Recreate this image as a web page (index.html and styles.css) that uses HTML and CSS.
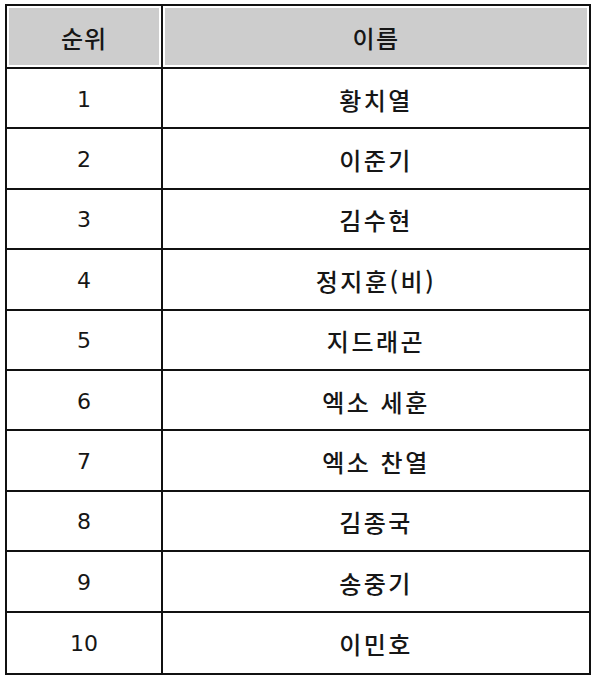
FILE: index.html
```html
<!DOCTYPE html>
<html lang="ko">
<head>
<meta charset="utf-8">
<title>순위</title>
<link rel="stylesheet" href="styles.css">
</head>
<body>
<div class="rank-table">
  <div class="cell head">순위</div>
  <div class="cell head name">이름</div>
  <div class="cell num">1</div><div class="cell name">황치열</div>
  <div class="cell num">2</div><div class="cell name">이준기</div>
  <div class="cell num">3</div><div class="cell name">김수현</div>
  <div class="cell num">4</div><div class="cell name">정지훈(비)</div>
  <div class="cell num">5</div><div class="cell name">지드래곤</div>
  <div class="cell num">6</div><div class="cell name">엑소 세훈</div>
  <div class="cell num">7</div><div class="cell name">엑소 찬열</div>
  <div class="cell num">8</div><div class="cell name">김종국</div>
  <div class="cell num">9</div><div class="cell name">송중기</div>
  <div class="cell num last">10</div><div class="cell name last">이민호</div>
</div>
</body>
</html>
```
FILE: styles.css
```css
html, body {
  margin: 0;
  padding: 0;
  background: #ffffff;
}

body {
  padding: 4px 0 0 5px;
  font-family: "Noto Sans CJK KR", "Noto Sans", sans-serif;
  color: #161616;
}

.rank-table {
  box-sizing: border-box;
  width: 586px;
  height: 671px;
  border: 2px solid #111;
  display: grid;
  grid-template-columns: 154px 1fr;
  grid-template-rows: 63px repeat(10, 1fr);
}

.cell {
  display: flex;
  align-items: center;
  justify-content: center;
  border-bottom: 2px solid #111;
  font-size: 24px;
  font-weight: 500;
  line-height: 1;
  padding-top: 3px;
  box-sizing: border-box;
}

.cell.name {
  border-left: 2px solid #111;
  letter-spacing: 2.5px;
}

.cell.last {
  border-bottom: none;
}

.head {
  background: #cdcdcd;
  box-shadow: inset 0 0 0 2px #ffffff;
  letter-spacing: 1px;
}

.head.name {
  letter-spacing: 1.5px;
}

.num {
  font-family: "DejaVu Sans", sans-serif;
  font-weight: normal;
  font-size: 22px;
}
```
